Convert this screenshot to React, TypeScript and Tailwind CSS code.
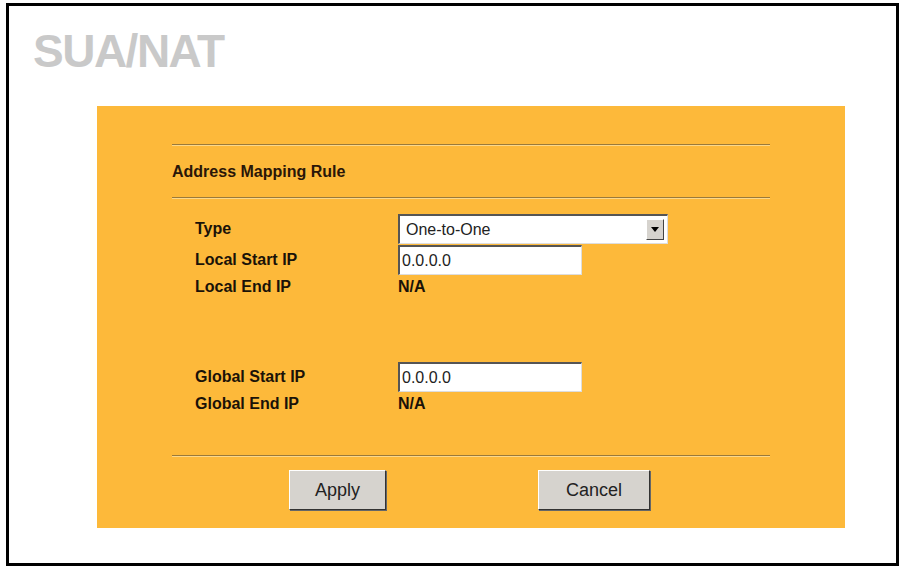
export default function App() {
  const f = { fontFamily: '"Liberation Sans", Arial, sans-serif' };
  const lbl = "text-[16px] font-bold text-[#1a1208] leading-[20px]";
  const inputBox =
    "bg-white border-t-2 border-l-2 border-t-[#555] border-l-[#555] border-b border-r border-b-[#ddd] border-r-[#ddd] text-[16px] text-[#222] pl-[2px] flex items-center";
  const btn =
    "h-[40px] bg-[#d6d3ce] border border-t-[#fff] border-l-[#fff] border-b-[#333] border-r-[#333] shadow-[1px_1px_0_#666] text-[18px] text-[#222] flex items-center justify-center";
  return (
    <div className="w-[906px] h-[570px] bg-white" style={f}>
      <div className="ml-[6px] mt-[3px] w-[893px] h-[563px] border-[3px] border-black relative">
        <div className="pl-[24px] pt-[22px] text-[46px] font-bold text-[#c9c9c9] leading-[46px] tracking-[-1.5px]">SUA/NAT</div>
        <div className="ml-[88px] mt-[32px] w-[748px] h-[422px] bg-[#fdb93a] pt-[38px] pl-[75px]">
          <div className="w-[598px] border-t border-t-[#9a7a3a] border-b border-b-[#fcd88a]" />
          <div className="h-[51px] flex items-center text-[16px] font-bold text-[#2a1608]">Address Mapping Rule</div>
          <div className="w-[598px] border-t border-t-[#9a7a3a] border-b border-b-[#fcd88a]" />
          <div className="pl-[23px] pt-[15px] grid grid-cols-[203px_auto] grid-rows-[30px_30px_22px_62px_30px_22px] items-center gap-y-[1px]">
            <div className={lbl}>Type</div>
            <div className={inputBox + " w-[270px] h-[30px] justify-between pr-[3px]"}>
              <span className="pl-[4px]">One-to-One</span>
              <span className="w-[18px] h-[21px] bg-[#d6d3ce] border border-t-white border-l-white border-b-[#444] border-r-[#444] flex items-center justify-center">
                <svg width="8" height="5" viewBox="0 0 8 5"><path d="M0 0h8L4 5z" fill="#000" /></svg>
              </span>
            </div>
            <div className={lbl}>Local Start IP</div>
            <div className={inputBox + " w-[184px] h-[30px]"}>0.0.0.0</div>
            <div className={lbl}>Local End IP</div>
            <div className={lbl}>N/A</div>
            <div />
            <div />
            <div className={lbl}>Global Start IP</div>
            <div className={inputBox + " w-[184px] h-[30px]"}>0.0.0.0</div>
            <div className={lbl}>Global End IP</div>
            <div className={lbl}>N/A</div>
          </div>
          <div className="w-[598px] mt-[40px] border-t border-t-[#9a7a3a] border-b border-b-[#fcd88a]" />
          <div className="flex mt-[13px]">
            <div className={btn + " ml-[117px] w-[97px]"}>Apply</div>
            <div className={btn + " ml-[152px] w-[112px]"}>Cancel</div>
          </div>
        </div>
      </div>
    </div>
  );
}
